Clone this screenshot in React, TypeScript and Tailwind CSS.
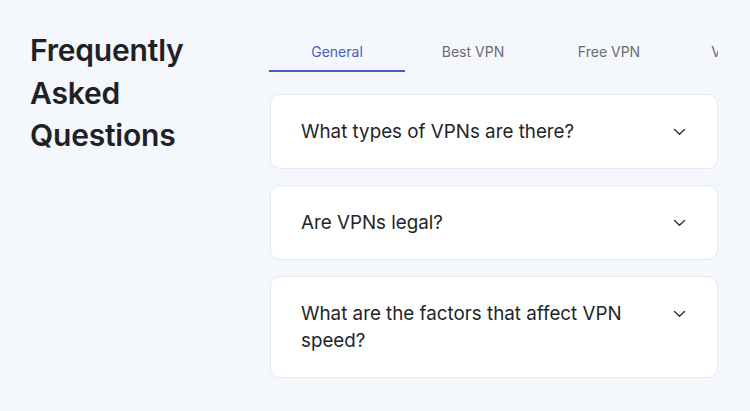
import React, { useState } from 'react';

const tabs = ['General', 'Best VPN', 'Free VPN', 'VPN Apps'];

const questions = [
  'What types of VPNs are there?',
  'Are VPNs legal?',
  'What are the factors that affect VPN speed?',
];

const Chevron: React.FC = () => (
  <svg width="13" height="8" viewBox="0 0 13 8" fill="none" className="mt-[10px] shrink-0">
    <path d="M1.5 1.5L6.5 6.3L11.5 1.5" stroke="#2a2a2e" strokeWidth="1.3" strokeLinecap="round" strokeLinejoin="round" />
  </svg>
);

export default function App() {
  const [active, setActive] = useState(0);

  return (
    <div className="min-h-screen w-full bg-[#f4f7fc] font-['Inter','Liberation_Sans',sans-serif] overflow-hidden">
      <div className="flex px-[30px]">
        <div className="w-[239px] shrink-0 pt-[29px]">
          <h1 className="text-[30px] leading-[42.5px] font-semibold text-[#1f2124] tracking-[-0.2px]">
            Frequently
            <br />
            Asked
            <br />
            Questions
          </h1>
        </div>

        <div className="w-[449px] shrink-0 pt-[31px]">
          <div className="flex overflow-hidden">
            {tabs.map((t, i) => (
              <button
                key={t}
                onClick={() => setActive(i)}
                className={
                  'w-[136px] shrink-0 pt-[11px] pb-[8px] text-center text-[14px] leading-[20px] border-b-2 ' +
                  (i === active
                    ? 'border-[#4a5bc5] text-[#4c5bb8]'
                    : 'border-transparent text-[#6b6c72]')
                }
              >
                {t}
              </button>
            ))}
          </div>

          <div className="mt-[22px] ml-px flex flex-col gap-4">
            {questions.map((q) => (
              <div
                key={q}
                className="flex items-start justify-between rounded-[10px] border border-[#e6e9ef] bg-white pl-[30px] pr-[31px] py-[23px]"
              >
                <span className="text-[18.8px] leading-[27px] font-normal text-[#232427] max-w-[340px]">{q}</span>
                <Chevron />
              </div>
            ))}
          </div>
        </div>
      </div>
    </div>
  );
}
